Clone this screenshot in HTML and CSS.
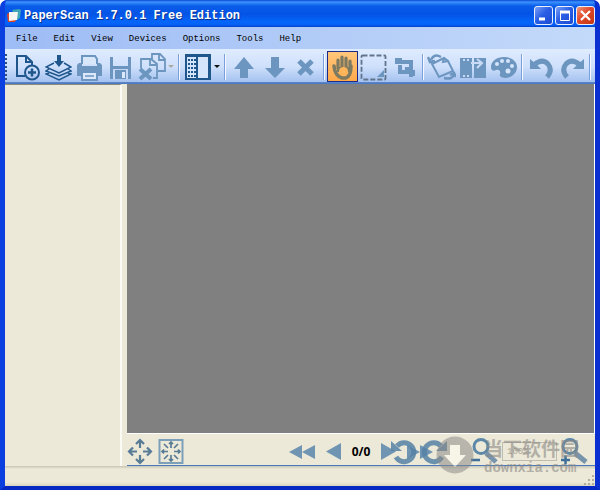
FILE: index.html
```html
<!DOCTYPE html>
<html lang="en">
<head>
  <meta charset="UTF-8" />
  <title>PaperScan 1.7.0.1 Free Edition</title>
  <link rel="stylesheet" href="styles.css">
</head>
<body>
  <div class="window">
    <header class="titlebar">
      <svg class="logo" width="14" height="14" viewBox="0 0 14 14">
        <path d="M5 1l7-1 2 1-1 8-3 2z" fill="#3fa7b8"/>
        <path d="M0 5l2-1v6l7 1-1 2H1z" fill="#d8442a"/>
        <path d="M2 3h9l-1 8-8 1z" fill="#f6f6f2"/>
      </svg>
      <h1>PaperScan 1.7.0.1 Free Edition</h1>
      <div class="window-buttons">
        <button class="win" aria-label="Minimize"><svg width="17" height="17"><path d="M4 12h6" stroke="#fff" stroke-width="3"/></svg></button>
        <button class="win" aria-label="Maximize"><svg width="17" height="17"><path d="M4.500 4v9.500h9V4" stroke="#fff" stroke-width="1" fill="none"/><path d="M4 5h10" stroke="#fff" stroke-width="3"/></svg></button>
        <button class="win close" aria-label="Close"><svg width="17" height="17"><path d="M4 4l9 9M13 4l-9 9" stroke="#fff" stroke-width="2.200"/></svg></button>
      </div>
    </header>

    <nav class="menu">
      <button>File</button>
      <button>Edit</button>
      <button>View</button>
      <button>Devices</button>
      <button>Options</button>
      <button>Tools</button>
      <button>Help</button>
    </nav>

    <div class="toolbar">
      <span class="grip"></span>
      <button class="tool dark" aria-label="New">
        <svg width="27" height="28" viewBox="0 0 27 28" fill="none" stroke="currentColor" stroke-width="2">
          <path d="M11 23H3V3h9l6 6v4M12 3v6h6"/>
          <circle cx="18" cy="19.500" r="7"/>
          <path d="M14 19.500h8M18 15.500v8" stroke-width="2.500"/>
        </svg>
      </button>
      <button class="tool dark" aria-label="Acquire">
        <svg width="27" height="28" viewBox="0 0 27 28" fill="none" stroke="currentColor" stroke-width="1.500">
          <path d="M9 10l-8 4 13 6 12-6-7-4M4 16l-3 2 13 5 12-5-3-2M4 20l-3 1 13 6 12-6-3-1"/>
          <path d="M12 2h4v6h3l-5 6-5-6h3z" fill="currentColor" stroke="none"/>
        </svg>
      </button>
      <button class="tool" aria-label="Print">
        <svg width="27" height="28" viewBox="0 0 27 28">
          <path d="M6 11V3h13l2 3v5" fill="#d9e7fb" stroke="currentColor" stroke-width="2"/>
          <path d="M3 10h3v3h15v-3h3l2 2v11h-5v-3H6v3H1V12z" fill="currentColor"/>
          <path d="M6 19v8h15v-8z" fill="#dbe8fb" stroke="currentColor" stroke-width="2"/>
          <path d="M9 23h9" stroke="currentColor" stroke-width="1.500"/>
        </svg>
      </button>
      <button class="tool" aria-label="Save">
        <svg width="27" height="28" viewBox="0 0 27 28">
          <path d="M3 4h3v9h15V4h3v22H3z" fill="currentColor"/>
          <path d="M6 16h15v10H6z" fill="#c4d8f6"/>
          <path d="M8 17h11v9H8z" fill="currentColor"/>
          <path d="M15 19h3v6h-3z" fill="#dbe8fb"/>
        </svg>
      </button>
      <button class="tool" aria-label="Close document">
        <svg width="29" height="29" viewBox="0 0 29 29" fill="none" stroke="currentColor" stroke-width="1.800">
          <path d="M15 7V2h8l5 5v12h-7M22 2v6h6"/>
          <path d="M4 16V7h10l6 5v14h-4M13 7v6h6"/>
          <path d="M3 17l11 10M14 17L3 27" stroke-width="4"/>
        </svg>
      </button>
      <button class="drop pale" aria-label="Close options"></button>
      <span class="sep"></span>
      <button class="tool dark" aria-label="Thumbnails">
        <svg width="27" height="28" viewBox="0 0 27 28">
          <path d="M1 1h26v26H1z" fill="currentColor"/>
          <path d="M3 4h9v21H3zM14 4h10v21H14z" fill="#d5e5fb"/>
          <path d="M4 7h8M4 11h8M4 15h8M4 19h8M4 23h8" stroke="currentColor" stroke-width="2" stroke-dasharray="2 1"/>
        </svg>
      </button>
      <button class="drop" aria-label="Thumbnail options"></button>
      <span class="sep"></span>
      <button class="tool" aria-label="Move up">
        <svg width="27" height="28" viewBox="0 0 27 28"><path d="M14 4l10 12h-6v9h-8v-9H4z" fill="currentColor"/></svg>
      </button>
      <button class="tool" aria-label="Move down">
        <svg width="27" height="28" viewBox="0 0 27 28"><path d="M14 25L4 15h6V4h8v11h6z" fill="currentColor"/></svg>
      </button>
      <button class="tool" aria-label="Delete">
        <svg width="27" height="28" viewBox="0 0 27 28"><path d="M7 8l13 13M20 8L7 21" stroke="currentColor" stroke-width="5"/></svg>
      </button>
      <span class="sep"></span>
      <button class="tool active" aria-label="Pan">
        <svg width="27" height="28" viewBox="0 0 27 28" fill="none" stroke="#7d7a62" stroke-linecap="round">
          <path d="M9 15V7M13 14V4M17 14V5M21 16V8" stroke-width="3.200"/>
          <path d="M5 13q1 10 8 12h4q5-2 5-12" stroke-width="3.500"/>
          <path d="M8 14h13v5H8z" fill="#7d7a62" stroke="none"/>
          <circle cx="14.500" cy="18.500" r="4.500" fill="#ffb65a" stroke="none"/>
        </svg>
      </button>
      <button class="tool" aria-label="Select">
        <svg width="27" height="28" viewBox="0 0 27 28">
          <rect x="1.500" y="2.500" width="24" height="24" rx="1" fill="none" stroke="#60748c" stroke-width="1.800" stroke-dasharray="5 2"/>
          <path d="M24 17v7h-7z" fill="currentColor"/>
        </svg>
      </button>
      <button class="tool" aria-label="Crop">
        <svg width="27" height="28" viewBox="0 0 27 28" fill="none" stroke="currentColor" stroke-width="4">
          <path d="M4 9h16v15M9 12v7h7v-5"/>
          <path d="M4 6h7M23 17v6" stroke-width="2"/>
        </svg>
      </button>
      <span class="sep"></span>
      <button class="tool" aria-label="Rotate page">
        <svg width="29" height="28" viewBox="0 0 29 28" fill="none" stroke="currentColor" stroke-width="2">
          <path d="M5 11l12-6 4 3 5 10-14 6zM17 5l-1 4 5-1"/>
          <path d="M14 4Q7 0 4 7M1 4l2 5 5-1M17 25q9 2 10-4M23 22l4-2 2 4" stroke-width="2.500"/>
        </svg>
      </button>
      <button class="tool" aria-label="Split pages">
        <svg width="27" height="28" viewBox="0 0 27 28">
          <path d="M1 5h12v20H1zM15 5h12v20H15z" fill="currentColor"/>
          <path d="M4 7h8M4 23h8" stroke="#c8daf5" stroke-width="2" stroke-dasharray="2 2"/>
          <path d="M12 10h10M18 6l5 4-5 5" stroke="#c8daf5" stroke-width="2" fill="none"/>
        </svg>
      </button>
      <button class="tool" aria-label="Colors">
        <svg width="27" height="28" viewBox="0 0 27 28">
          <path d="M14 4C7 4 1 8 1 14c0 3 2 5 5 3 3-1 5 1 4 4-1 3 2 4 5 4 7 0 12-5 12-11S21 4 14 4z" fill="currentColor"/>
          <g fill="#d5e4f9"><circle cx="7" cy="11" r="2"/><circle cx="12" cy="8" r="2"/><circle cx="18" cy="8" r="2"/><circle cx="22" cy="13" r="2"/><circle cx="18" cy="18" r="2.500"/></g>
        </svg>
      </button>
      <span class="sep"></span>
      <button class="tool" aria-label="Undo">
        <svg width="27" height="28" viewBox="0 0 27 28"><path d="M3 6v10h11l-4-4" fill="currentColor"/><path d="M7 12Q15 5 21 11q5 6-1 13" fill="none" stroke="currentColor" stroke-width="5"/></svg>
      </button>
      <button class="tool" aria-label="Redo">
        <svg width="27" height="28" viewBox="0 0 27 28"><path d="M26 6v10H15l4-4" fill="currentColor"/><path d="M22 12Q14 5 8 11q-5 6 1 13" fill="none" stroke="currentColor" stroke-width="5"/></svg>
      </button>
      <span class="sep"></span>
    </div>

    <main class="workspace">
      <aside class="thumbs"></aside>
      <section class="viewer">
        <div class="canvas"></div>
        <div class="bottombar">
          <div class="fit">
            <button aria-label="Fit width">
              <svg width="26" height="27" viewBox="0 0 26 27" fill="none" stroke="currentColor" stroke-width="2.200">
                <path d="M13 2v8M13 17v8M2 13.500h8M16 13.500h8M9 6l4-4 4 4M9 21l4 4 4-4M6 9.500l-4 4 4 4M20 9.500l4 4-4 4"/>
              </svg>
            </button>
            <button aria-label="Fit page">
              <svg width="26" height="27" viewBox="0 0 26 27" fill="none" stroke="currentColor" stroke-width="1.700">
                <path d="M1.500 2h23v23h-23z" stroke="#7c9fba" stroke-width="2"/>
                <path d="M13 4v6M13 17v6M4 13.500h6M16 13.500h6M6 6l4 4M20 6l-4 4M6 21l4-4M20 21l-4-4M11 6l2-2 2 2M11 21l2 2 2-2M6 11.500l-2 2 2 2M20 11.500l2 2-2 2"/>
              </svg>
            </button>
          </div>
          <div class="pager">
            <button aria-label="First page"><svg width="26" height="16"><path d="M13 1v14L0 8zM26 1v14L13 8z" fill="currentColor"/></svg></button>
            <button aria-label="Previous page"><svg width="15" height="17"><path d="M15 0v17L0 8.500z" fill="currentColor"/></svg></button>
            <span class="count">0/0</span>
            <button aria-label="Next page"><svg width="15" height="17"><path d="M0 0v17l15-8.500z" fill="currentColor"/></svg></button>
            <button aria-label="Last page"><svg width="26" height="16"><path d="M0 1v14l13-7zM13 1v14l13-7z" fill="currentColor"/></svg></button>
          </div>
          <div class="view-tools">
            <button class="rotate" aria-label="Rotate left">
              <svg width="26" height="26" viewBox="0 0 26 26"><path d="M6 7A9.500 9.500 0 1 1 5 18" fill="none" stroke="currentColor" stroke-width="5"/><path d="M0 2v10h11z" fill="currentColor"/></svg>
            </button>
            <button class="rotate" aria-label="Rotate right">
              <svg width="26" height="26" viewBox="0 0 26 26"><path d="M20 7A9.500 9.500 0 1 0 21 18" fill="none" stroke="currentColor" stroke-width="5"/><path d="M26 2v10H15z" fill="currentColor"/></svg>
            </button>
            <button class="zoom-out" aria-label="Zoom out">
              <svg width="27" height="27" viewBox="0 0 27 27" fill="none"><path d="M15 15l10 9" stroke="#7794ac" stroke-width="5"/><circle cx="10" cy="8.500" r="7" stroke="#5d88a8" stroke-width="3"/><path d="M0 22h9" stroke="#3f6f98" stroke-width="2.500"/></svg>
            </button>
            <input class="zoom-level" type="text" value="100%" aria-label="Zoom level" disabled>
            <button aria-label="Zoom in">
              <svg width="27" height="27" viewBox="0 0 27 27" fill="none"><path d="M14 15l11 9" stroke="#7794ac" stroke-width="5"/><circle cx="9" cy="8.500" r="7" stroke="#5d88a8" stroke-width="3"/><path d="M0 22h9M4.500 17.500v9" stroke="#3f6f98" stroke-width="2.500"/></svg>
            </button>
          </div>
          <div class="watermark">
            <svg width="38" height="38" viewBox="0 0 38 38">
              <circle cx="19" cy="19" r="18.500" fill="#8c8a87" fill-opacity=".9"/>
              <path d="M14 9h10v10h6L19 31 8 19h6z" fill="#fffdf2"/>
            </svg>
            <div class="mark-text">
              <span class="mark-cn">当下软件园</span>
              <span class="mark-url">downxia.com</span>
            </div>
          </div>
        </div>
      </section>
    </main>

    <footer class="statusbar">
      <svg width="12" height="12" fill="#b3ae9b"><path d="M9 1h2v2H9zM5 5h2v2H5zM9 5h2v2H9zM1 9h2v2H1zM5 9h2v2H5zM9 9h2v2H9z"/></svg>
    </footer>
  </div>
</body>
</html>
```
FILE: styles.css
```css
* {
  box-sizing: border-box;
}

body {
  margin: 0;
  background: #fff;
  font-family: "Liberation Mono", monospace;
}

button {
  margin: 0;
  padding: 0;
  border: 0;
  background: none;
  font: inherit;
  color: inherit;
}

svg {
  display: block;
}

.window {
  display: flex;
  flex-direction: column;
  height: 100vh;
  border: solid #0a3fe0;
  border-width: 0 5px 4px;
  border-right-color: #0a30d2;
  border-bottom-color: #0528c4;
  border-radius: 7px 7px 0 0;
  background: #0a3fe0;
  overflow: hidden;
}

.titlebar {
  display: flex;
  align-items: center;
  height: 27px;
  margin: 0 -5px;
  padding: 4px 5px 0 7px;
  background: linear-gradient(#0a49d0 0, #3c92ff 2px, #0a5ce8 6px, #0354e6 14px, #0566fb 22px, #0560f5 25px, #0340c4 27px);
}

.titlebar h1 {
  flex: 1;
  margin: 0 0 0 3px;
  font-size: 12px;
  line-height: 16px;
  color: #fff;
  text-shadow: 1px 1px 0 #0a2f8c;
}

.window-buttons {
  display: flex;
  gap: 2px;
}

.win {
  width: 19px;
  height: 19px;
  border: 1px solid #e8efff;
  border-radius: 3px;
  background: linear-gradient(135deg, #7ba0f5, #2a5fe6 45%, #1c4bd0);
}

.close {
  background: linear-gradient(135deg, #f0987c, #e0492a 45%, #c23612);
}

.menu {
  display: flex;
  gap: 16px;
  height: 22px;
  padding: 2px 11px 0;
  background: linear-gradient(90deg, #9ebcf5, #c4dafa);
  font-size: 9px;
  color: #000;
}

.toolbar {
  display: flex;
  align-items: center;
  height: 35px;
  background: linear-gradient(#dfecff, #cfe0fb 50%, #a5c2f0 94%, #4d79c0 96%);
  color: #6c96bf;
}

.grip {
  width: 7px;
  height: 26px;
  border-left: 2px dotted #2f4f88;
}

.tool {
  display: flex;
  justify-content: center;
  align-items: center;
  width: 31px;
  height: 31px;
  flex: none;
}

.dark {
  color: #1f578c;
}

.active {
  border: 1px solid #1d2b86;
  background: linear-gradient(#ffc77c, #ffa94a);
}

.drop {
  width: 9px;
  height: 31px;
}

.drop::after {
  content: "";
  display: block;
  width: 0;
  margin-left: 1px;
  border: 3px solid transparent;
  border-top-color: #111;
  border-bottom: 0;
}

.pale::after {
  border-top-color: #a9a9a4;
}

.sep {
  flex: none;
  width: 6px;
  height: 26px;
  background: linear-gradient(90deg, transparent 2px, #7b9fdc 2px 3px, #f4f8ff 3px 4px, transparent 4px);
}

.workspace {
  display: flex;
  flex: 1;
  background: #ece9d8;
}

.thumbs {
  width: 20%;
  max-width: 117px;
  border-top: 1px solid #8d8a7d;
  border-right: 2px solid #fbfaf4;
}

.viewer {
  display: flex;
  flex: 1;
  flex-direction: column;
  margin-left: 5px;
}

.canvas {
  flex: 1;
  background: #808080;
  border: solid #fff;
  border-width: 0 1px 1px 0;
}

.bottombar {
  position: relative;
  display: grid;
  grid-template-columns: 1fr auto 1fr;
  height: 32px;
  border-bottom: 1px solid #4a78bd;
  color: #5582a6;
}

.fit {
  display: flex;
  align-items: flex-end;
  gap: 5px;
  color: #587b96;
}

.pager {
  display: flex;
  align-items: center;
  gap: 11px;
  padding-top: 4px;
  color: #7095b2;
}

.count {
  font: bold 12px "Open Sans", sans-serif;
  color: #000;
}

.view-tools {
  position: absolute;
  top: 4px;
  right: 7px;
  display: flex;
  align-items: center;
  gap: 4px;
}

.rotate {
  opacity: 0.85;
}

.zoom-out {
  margin-left: 20px;
}

.zoom-level {
  width: 55px;
  height: 19px;
  padding: 0 4px;
  border: 1px solid #c0bdb0;
  background: transparent;
  font: 9px "Liberation Mono", monospace;
  color: #aaa799;
}

.watermark {
  position: absolute;
  top: 2px;
  right: 16px;
  display: flex;
  gap: 10px;
  color: #8c8a87;
  white-space: nowrap;
  opacity: 0.6;
  pointer-events: none;
}

.mark-text {
  display: flex;
  flex-direction: column;
}

.mark-cn {
  font: bold 19px/24px "Noto Sans CJK SC", sans-serif;
}

.mark-url {
  font: bold 14px/16px "Liberation Mono", monospace;
}

.statusbar {
  display: flex;
  justify-content: flex-end;
  align-items: flex-end;
  height: 20px;
  background: linear-gradient(#c9c5b4, #ece9d8 3px, #ece9d8 16px, #d8d4c0);
}
```
